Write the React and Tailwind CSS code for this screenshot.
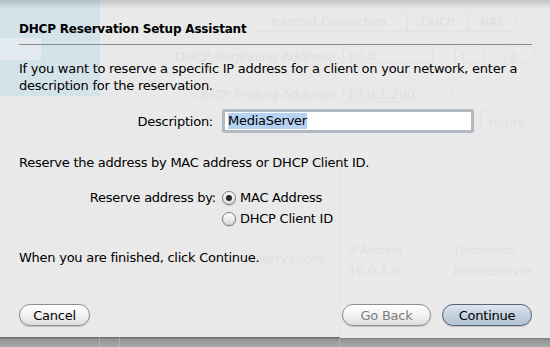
import React from "react";

const ghost = "text-[#e0e0e0]";

function Radio({ checked }) {
  return (
    <span className="w-[14px] h-[14px] rounded-full border border-[#7c7c7c] bg-gradient-to-b from-white to-[#d9d9d9] shadow-[0_1px_1px_rgba(0,0,0,0.15)] flex items-center justify-center shrink-0">
      {checked && <span className="w-[6px] h-[6px] rounded-full bg-[#2a2a2a]" />}
    </span>
  );
}

function Pill({ children, primary, disabled, className = "" }) {
  const tone = primary
    ? "border-[#55657c] bg-gradient-to-b from-[#dfe7f0] via-[#c3d0df] to-[#b5c4d6] text-black"
    : "border-[#8e8e8e] bg-gradient-to-b from-white via-[#f3f3f3] to-[#dedede] " +
      (disabled ? "text-[#808080]" : "text-black");
  return (
    <button
      className={`h-[22px] rounded-full border shadow-[0_1px_1px_rgba(0,0,0,0.18)] flex items-center justify-center leading-none ${tone} ${className}`}
    >
      {children}
    </button>
  );
}

// faint window content seen through the sheet
function Backdrop() {
  return (
    <div className="absolute inset-0 pointer-events-none">
      <div className="absolute left-0 top-0 w-[100px] h-[96px] bg-[#d4e2ea]" />
      <div className="absolute left-0 top-[38px] w-[41px] h-[22px] bg-[#e3ebf0]" />
      <div className="absolute left-[250px] top-[11px] w-[266px] h-[21px] rounded-[4px] border border-[#e2e2e2] flex text-[12px] text-[#dedede]">
        <div className="w-[157px] flex items-center justify-center border-r border-[#e2e2e2]">Internet Connection</div>
        <div className="w-[60px] flex items-center justify-center border-r border-[#e2e2e2]">DHCP</div>
        <div className="flex-1 flex items-center justify-center">NAT</div>
      </div>
      <div className={`absolute left-[175px] top-[47px] ${ghost}`}>DHCP Beginning Address:</div>
      <div className={`absolute left-[343px] top-[46px] w-[90px] h-[18px] border border-[#e3e3e3] px-[3px] ${ghost}`}>10.0</div>
      <div className={`absolute left-[455px] top-[46px] w-[30px] h-[18px] border border-[#e3e3e3] px-[3px] ${ghost}`}>1</div>
      <div className={`absolute left-[505px] top-[46px] w-[30px] h-[18px] border border-[#e3e3e3] px-[3px] ${ghost}`}>2</div>
      <div className={`absolute left-[195px] top-[85px] ${ghost}`}>DHCP Ending Address:</div>
      <div className={`absolute left-[343px] top-[84px] w-[110px] h-[18px] border border-[#e3e3e3] px-[3px] ${ghost}`}>10.0.1.200</div>
      <div className={`absolute left-[480px] top-[110px] w-[80px] h-[22px] border border-[#e3e3e3] px-[8px] pt-[2px] ${ghost}`}>hours</div>
      <div className="absolute left-[340px] top-[148px] w-[220px] h-[190px] border-l border-t border-[#e4e4e4] bg-[#eaeaea]" />
      <div className={`absolute left-[245px] top-[249px] ${ghost}`}>Reservations:</div>
      <div className={`absolute left-[345px] top-[243px] w-[205px] flex text-[11px] ${ghost}`}>
        <span className="w-[105px] pl-[3px] border-r border-[#e3e3e3]">IP Address</span>
        <span className="pl-[5px]">Description</span>
      </div>
      <div className={`absolute left-[345px] top-[261px] w-[205px] flex ${ghost}`}>
        <span className="w-[108px] pl-[3px]">10.0.1.9</span>
        <span>MediaServer</span>
      </div>
    </div>
  );
}

export default function App() {
  return (
    <div className="w-[550px] h-[347px] overflow-hidden flex flex-col bg-[#a3a3a3] font-['Lucida_Grande','DejaVu_Sans',sans-serif] text-[13px] tracking-[-0.25px] text-black">
      <div className="relative h-[337px] bg-[#e9e9e9] shadow-[0_1px_2px_rgba(0,0,0,0.35)]">
        <Backdrop />
        <div className="absolute inset-x-0 top-0 h-[9px] bg-gradient-to-b from-[rgba(0,0,0,0.16)] to-transparent" />

        <div className="relative flex flex-col px-[19px] pt-[21px]">
          <h1 className="font-bold text-[12px] tracking-[-0.2px] leading-[16px]">DHCP Reservation Setup Assistant</h1>
          <div className="mt-[7px] mr-[-1px] h-px bg-[#8c8c8c]" />

          <p className="mt-[15px] leading-[17px]">
            If you want to reserve a specific IP address for a client on your network, enter a
            description for the reservation.
          </p>

          <div className="mt-[15px] flex items-center">
            <span className="w-[203px] shrink-0 text-right pr-[9px] pt-[2px]">Description:</span>
            <div className="w-[252px] h-[24px] border-[3px] border-[#b3b9c1] rounded-[2px] bg-white flex items-center px-[3px]">
              <span className="bg-[#b7d3f4] leading-[16px]">MediaServer</span>
            </div>
          </div>

          <p className="mt-[21px] leading-[17px]">Reserve the address by MAC address or DHCP Client ID.</p>

          <div className="mt-[17px] flex">
            <span className="w-[203px] shrink-0 text-right pr-[6px] leading-[20px]">Reserve address by:</span>
            <div className="flex flex-col">
              <label className="flex items-center gap-[4px] h-[20px]">
                <Radio checked />
                MAC Address
              </label>
              <label className="flex items-center gap-[4px] h-[21px]">
                <Radio />
                DHCP Client ID
              </label>
            </div>
          </div>

          <p className="mt-[20px] leading-[17px]">When you are finished, click Continue.</p>

          <div className="mt-[38px] flex items-center">
            <Pill className="w-[71px]">Cancel</Pill>
            <div className="flex-1" />
            <Pill disabled className="w-[89px]">Go Back</Pill>
            <Pill primary className="w-[90px] ml-[11px] mr-[-1px]">Continue</Pill>
          </div>
        </div>
      </div>
      <div className="flex-1 flex bg-gradient-to-b from-[#8e8e8e] to-[#a9a9a9]">
        <div className="w-[100px] border-r border-[#b5b5b5]" />
        <div className="w-[20px] border-r border-[#b5b5b5]" />
        <div className="w-[220px] border-r border-[#b5b5b5]" />
      </div>
    </div>
  );
}
